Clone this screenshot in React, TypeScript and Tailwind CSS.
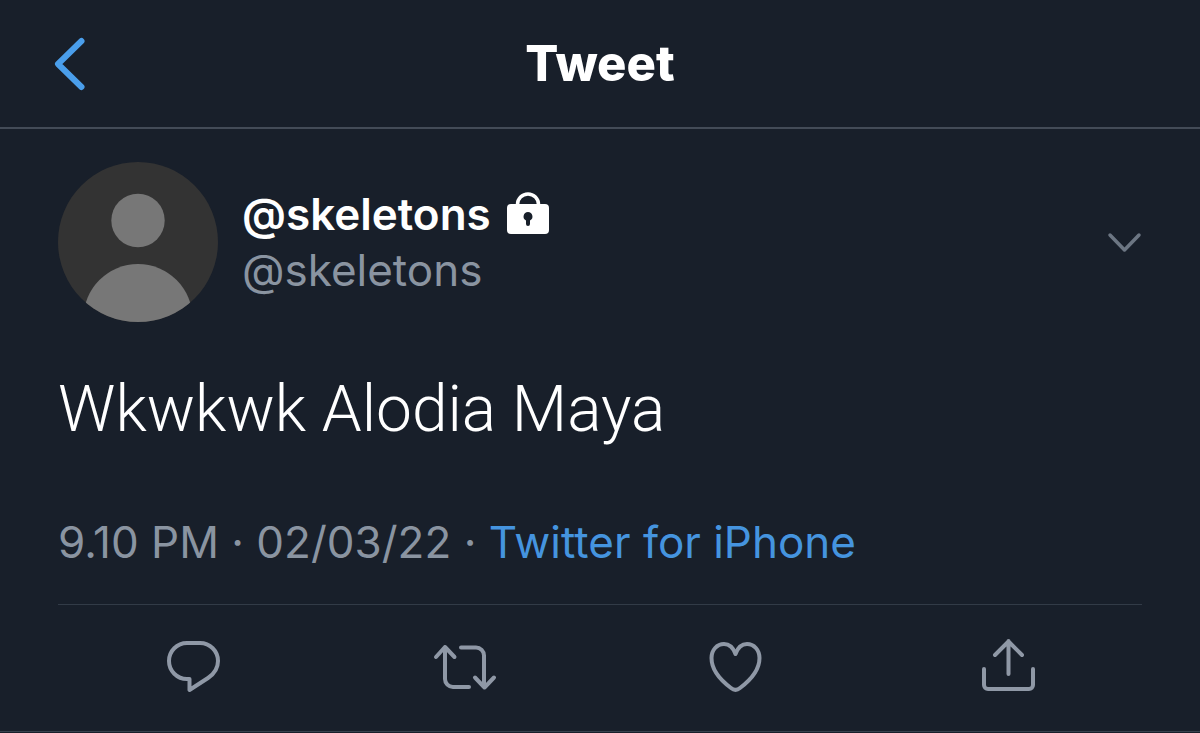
import React from "react";

/* ── Tweet data ────────────────────────────────────── */
const tweet = {
  name: "@skeletons",
  handle: "@skeletons",
  text: "Wkwkwk Alodia Maya",
  time: "9.10 PM",
  date: "02/03/22",
  source: "Twitter for iPhone",
};

const actions = [
  {
    label: "Reply",
    path: "M25 7H38A18 18 0 0 1 56 25C56 32.500 52 38 46 42L27.500 54V43H25A18 18 0 0 1 25 7Z",
  },
  {
    label: "Retweet",
    path: "M3 21L12 11L21.500 21M12 11V43A8 8 0 0 0 20 51H36M28 11.500H43A8 8 0 0 1 51 19.500V51M42 41.500L51.500 51.500L61 41.500",
  },
  {
    label: "Like",
    path: "M31.500 18C29 11 24.500 8 20 8C13 8 7.500 14 7.500 22C7.500 32 15 43 27 52C30 54.500 33 54.500 36 52C48 43 55.500 32 55.500 22C55.500 14 50 8 43 8C38.500 8 34 11 31.500 18Z",
  },
  {
    label: "Share",
    path: "M33.500 38V5M20 19L33.500 5.500L47 19M9 33V49A4 4 0 0 0 13 53H54A4 4 0 0 0 58 49V33",
  },
];

/* ── Icons ─────────────────────────────────────────── */
const BackIcon = () => (
  <svg viewBox="0 0 36 56" className="w-9 h-14" fill="none" stroke="currentColor" strokeWidth="6" strokeLinecap="round" strokeLinejoin="round">
    <path d="M29.500 5L6 28L29.500 51" />
  </svg>
);

const LockIcon = () => (
  <svg viewBox="0 0 42 44" className="w-[42px] h-11" role="img" aria-label="Protected account">
    <path d="M10.500 14V12.500A10.500 10.500 0 0 1 31.500 12.500V14" fill="none" stroke="currentColor" strokeWidth="3.500" />
    <rect x="0" y="12" width="42" height="30" rx="4" fill="currentColor" />
    <path d="M21 20a4.500 4.500 0 0 1 2 8.500v3.500a2 2 0 0 1-4 0v-3.500a4.500 4.500 0 0 1 2-8.500z" fill="#181f2a" />
  </svg>
);

const CaretIcon = () => (
  <svg viewBox="0 0 36 24" className="w-9 h-6" fill="none" stroke="currentColor" strokeWidth="3.500" strokeLinecap="round" strokeLinejoin="round">
    <path d="M4 5L18.500 20L33 5" />
  </svg>
);

const Avatar = () => (
  <svg viewBox="0 0 160 160" className="w-40 h-40 shrink-0" role="img" aria-label="Avatar">
    <clipPath id="avatar-clip">
      <circle cx="80" cy="80" r="80" />
    </clipPath>
    <g clipPath="url(#avatar-clip)">
      <rect width="160" height="160" fill="#333333" />
      <circle cx="80" cy="58.500" r="26.700" fill="#777777" />
      <circle cx="80" cy="156.600" r="54.600" fill="#777777" />
    </g>
  </svg>
);

/* ── Main Export ───────────────────────────────────── */
export default function App() {
  return (
    <div className="min-h-screen bg-[#181f2a] text-white font-['Inter',sans-serif]">
      <header className="grid grid-cols-[1fr_auto_1fr] items-center h-[129px] px-[52px] border-b-2 border-[#434b57]">
        <button type="button" aria-label="Back" className="justify-self-start text-[#4a9eeb]">
          <BackIcon />
        </button>
        <h1 className="text-[49px] leading-[56px] font-extrabold">Tweet</h1>
      </header>

      <article className="border-b border-[#38424e]">
        <div className="px-[58px] pt-[33px]">
          <div className="flex items-center">
            <Avatar />
            <div className="ml-6 flex-1 min-w-0">
              <div className="flex items-center gap-4">
                <span className="text-[44px] leading-[56px] font-semibold">{tweet.name}</span>
                <LockIcon />
              </div>
              <div className="text-[44px] leading-[56px] text-[#8a94a1]">{tweet.handle}</div>
            </div>
            <button type="button" aria-label="More" className="text-[#6c7683]">
              <CaretIcon />
            </button>
          </div>

          <p className="mt-12 text-[64px] leading-[80px] font-light font-['Roboto',sans-serif]">{tweet.text}</p>

          <div className="mt-16 pb-[34px] text-[44px] leading-[56px] text-[#8a94a1] border-b border-[#323b47]">
            {tweet.time} · {tweet.date} ·{" "}
            <a href="#source" className="text-[#4594df]">{tweet.source}</a>
          </div>
        </div>

        <div className="grid grid-cols-4 items-center h-[126px] px-[58px] text-[#8f98a6]">
          {actions.map((action) => (
            <button key={action.label} type="button" aria-label={action.label} className="justify-self-center">
              <svg viewBox="0 0 64 64" className="w-16 h-16" fill="none" stroke="currentColor" strokeWidth="4" strokeLinecap="round" strokeLinejoin="round">
                <path d={action.path} />
              </svg>
            </button>
          ))}
        </div>
      </article>
    </div>
  );
}
